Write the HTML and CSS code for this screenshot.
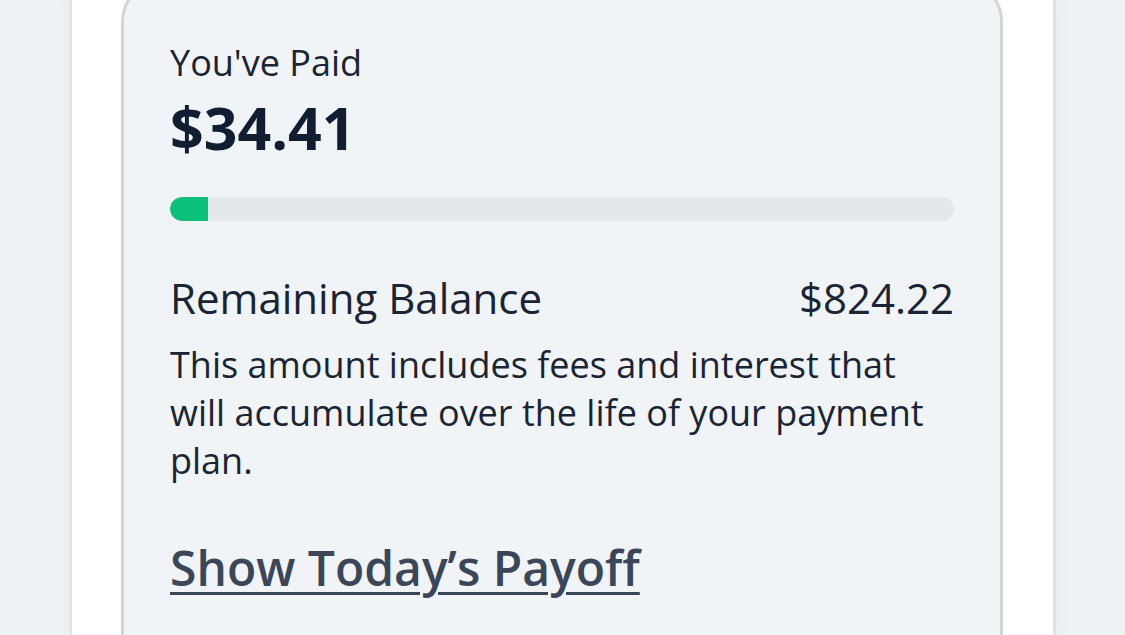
FILE: index.html
```html
<!DOCTYPE html>
<html lang="en">
<head>
<meta charset="utf-8">
<title>Payment plan</title>
<link rel="stylesheet" href="styles.css">
</head>
<body>
<div class="page">
  <div class="sheet">
    <section class="card">
      <div class="paid-label">You've Paid</div>
      <div class="paid-amount">$34.41</div>
      <div class="progress"><div class="progress-fill" style="width: 38px"></div></div>
      <div class="balance-row">
        <span class="balance-label">Remaining Balance</span>
        <span class="balance-value">$824.22</span>
      </div>
      <p class="balance-note">This amount includes fees and interest that will accumulate over the life of your payment plan.</p>
      <a class="payoff-link" href="#">Show Today’s Payoff</a>
    </section>
  </div>
</div>
</body>
</html>
```

FILE: styles.css
```css
*, *::before, *::after {
  box-sizing: border-box;
}
html, body {
  margin: 0;
  padding: 0;
  height: 100%;
  overflow: hidden;
}
body {
  background: #eff2f4;
  font-family: "Open Sans", "Noto Sans", sans-serif;
  color: #1a2434;
}
.page {
  display: flex;
  justify-content: flex-start;
  padding-left: 70px;
  height: 100%;
}
.sheet {
  width: 986px;
  flex: none;
  background: #ffffff;
  border-left: 2px solid #dfe2e5;
  border-right: 3px solid #dfe2e5;
  box-shadow: -6px 0 10px rgba(0,0,0,0.025), 6px 0 10px rgba(0,0,0,0.025);
  padding: 0 50px 0 49px;
  height: 100%;
}
.card {
  margin-top: -22px;
  background: #f0f4f6;
  border: 3px solid #d3d6d9;
  border-radius: 44px;
  padding: 58px 46px 40px 46px;
  height: 760px;
}
.paid-label {
  font-size: 36px;
  line-height: 48px;
}
.paid-amount {
  margin-top: 8px;
  font-size: 59px;
  line-height: 64px;
  font-weight: 700;
  color: #111e31;
}
.progress {
  margin-top: 38px;
  height: 24px;
  border-radius: 12px;
  background: #e4e8ea;
  overflow: hidden;
}
.progress-fill {
  height: 100%;
  background: #0cc27b;
  border-radius: 12px 0 0 12px;
}
.balance-row {
  margin-top: 53px;
  display: flex;
  justify-content: space-between;
  font-size: 42px;
  line-height: 48px;
}
.balance-note {
  margin: 19px 0 0 0;
  font-size: 36px;
  line-height: 48px;
}
.payoff-link {
  display: inline-block;
  margin-top: 55px;
  font-size: 48px;
  line-height: 56px;
  font-weight: 600;
  color: #3b4758;
  text-decoration: underline;
  text-decoration-thickness: 3px;
  text-underline-offset: 6px;
}
```
